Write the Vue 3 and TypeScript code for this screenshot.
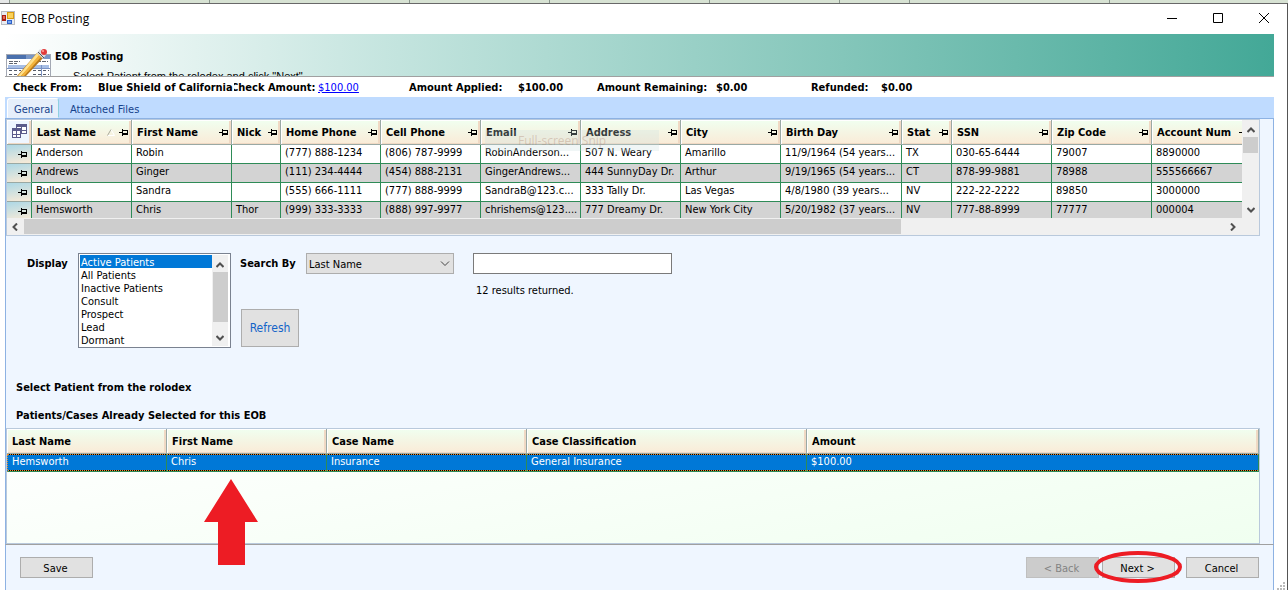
<script setup lang="ts">
import { ref } from 'vue'

interface Column {
  title: string
  width: number
}

const columns: Column[] = [
  { title: 'Last Name', width: 100 },
  { title: 'First Name', width: 100 },
  { title: 'Nick', width: 49 },
  { title: 'Home Phone', width: 100 },
  { title: 'Cell Phone', width: 100 },
  { title: 'Email', width: 100 },
  { title: 'Address', width: 100 },
  { title: 'City', width: 100 },
  { title: 'Birth Day', width: 121 },
  { title: 'Stat', width: 50 },
  { title: 'SSN', width: 100 },
  { title: 'Zip Code', width: 100 },
  { title: 'Account Num', width: 100 },
]

const patients: string[][] = [
  ['Anderson', 'Robin', '', '(777) 888-1234', '(806) 787-9999', 'RobinAnderson...', '507 N. Weary', 'Amarillo', '11/9/1964 (54 years...', 'TX', '030-65-6444', '79007', '8890000'],
  ['Andrews', 'Ginger', '', '(111) 234-4444', '(454) 888-2131', 'GingerAndrews...', '444 SunnyDay Dr.', 'Arthur', '9/19/1965 (54 years...', 'CT', '878-99-9881', '78988', '555566667'],
  ['Bullock', 'Sandra', '', '(555) 666-1111', '(777) 888-9999', 'SandraB@123.c...', '333 Tally Dr.', 'Las Vegas', '4/8/1980 (39 years...', 'NV', '222-22-2222', '89850', '3000000'],
  ['Hemsworth', 'Chris', 'Thor', '(999) 333-3333', '(888) 997-9977', 'chrishems@123....', '777 Dreamy Dr.', 'New York City', '5/20/1982 (37 years...', 'NV', '777-88-8999', '77777', '000004'],
]

const displayOptions = ['Active Patients', 'All Patients', 'Inactive Patients', 'Consult', 'Prospect', 'Lead', 'Dormant']
const display = ref('Active Patients')
const searchBy = ref('Last Name')
const query = ref('')

const caseColumns: Column[] = [
  { title: 'Last Name', width: 160 },
  { title: 'First Name', width: 160 },
  { title: 'Case Name', width: 200 },
  { title: 'Case Classification', width: 280 },
]
const caseRow = ['Hemsworth', 'Chris', 'Insurance', 'General Insurance', '$100.00']
const backdropColumns = [10, 200, 200, 140, 160, 130, 70, 200]
</script>

<template>
  <div class="screen">
    <div class="backdrop">
      <span v-for="(w, i) in backdropColumns" :key="i" :style="{ width: w + 'px' }"></span>
    </div>
    <main class="window">
      <header class="titlebar">
        <svg class="app-icon" width="14" height="14" viewBox="0 0 14 14">
          <rect width="14" height="14" fill="#b9bcc2" />
          <rect x="1" y="1" width="12" height="12" fill="#e8ebf1" />
          <rect x="6" y="1" width="7" height="7" fill="#d99a10" />
          <rect x="7" y="2" width="5" height="5" fill="#fbd25a" />
          <rect x="1" y="4" width="4" height="6" fill="#a81d12" />
          <rect x="2" y="5" width="2" height="3" fill="#e46a55" />
          <rect x="6" y="9" width="5" height="4" fill="#2f62c9" />
          <rect x="7" y="10" width="3" height="2" fill="#78a7f0" />
        </svg>
        <h1>EOB Posting</h1>
        <div class="caption-buttons">
          <button type="button" aria-label="Minimize">
            <svg width="12" height="12"><path d="M1 6.500h10" stroke="#000" /></svg>
          </button>
          <button type="button" aria-label="Maximize">
            <svg width="12" height="12"><path d="M1.500 1.500h9v9h-9z" fill="none" stroke="#000" /></svg>
          </button>
          <button type="button" aria-label="Close">
            <svg width="12" height="12"><path d="M1 1l10 10M11 1L1 11" stroke="#000" /></svg>
          </button>
        </div>
      </header>

      <section class="banner">
        <svg class="banner-icon" width="46" height="28" viewBox="0 0 46 28">
          <rect x="0.500" y="6.500" width="44" height="24" fill="#fff" stroke="#a3a8b3" />
          <rect x="1" y="7" width="43" height="4" fill="#4a70ad" />
          <rect x="20" y="7" width="24" height="4" fill="#7896c6" />
          <path d="M3 13.500h11M3 15.500h8M31 13.500h11" stroke="#60656f" stroke-dasharray="4 1" />
          <rect x="2" y="17" width="41" height="3" fill="#a8bfe5" />
          <path d="M3 22.500h12M27 22.500h16M3 26.500h9M27 26.500h16" stroke="#555b68" stroke-dasharray="3 2" />
          <path d="M1 20.500h43M35.500 17v11" stroke="#7b93c4" />
          <path d="M31 5l6 5-17 18h-9z" fill="#b97a1c" />
          <path d="M31 5l3 3-19 20h-3z" fill="#ffe08a" />
          <path d="M33 7l2 2-17 19h-3z" fill="#f3b33c" />
          <path d="M31 5l3-4 6 6-3 4z" fill="#d9dce2" />
          <path d="M32 4l6 6" stroke="#555" />
          <circle cx="38" cy="4" r="3" fill="#e13c3c" />
          <circle cx="37" cy="3" r="1" fill="#ffa9a0" />
        </svg>
        <div>
          <h2>EOB Posting</h2>
          <p>Select Patient from the rolodex and click "Next"</p>
        </div>
      </section>

      <dl class="summary">
        <div class="check-from"><dt>Check From:</dt><dd>Blue Shield of California</dd></div>
        <div class="check-amount"><dt>Check Amount:</dt><dd><a href="#">$100.00</a></dd></div>
        <div class="applied"><dt>Amount Applied:</dt><dd>$100.00</dd></div>
        <div class="remaining"><dt>Amount Remaining:</dt><dd>$0.00</dd></div>
        <div class="refunded"><dt>Refunded:</dt><dd>$0.00</dd></div>
      </dl>

      <nav class="tabs">
        <button type="button" class="active">General</button>
        <button type="button">Attached Files</button>
      </nav>

      <section class="panel">
        <div class="rolodex">
          <div class="rolodex-body">
            <div class="rolodex-view">
              <table>
                <colgroup>
                  <col class="rowhead-col" />
                  <col v-for="c in columns" :key="c.title" :style="{ width: c.width + 'px' }" />
                </colgroup>
                <thead>
                  <tr>
                    <th class="chooser">
                      <svg width="15" height="15" viewBox="0 0 15 15" fill="#fff" stroke="#5c5c8c">
                        <rect x="4.500" y="0.500" width="10" height="9" />
                        <path d="M5 2h9" stroke-width="2" />
                        <path d="M9.500 3v6M5 6.500h9" />
                        <rect x="0.500" y="4.500" width="8" height="9" />
                        <path d="M1 6h7" stroke-width="2" />
                        <path d="M1 10.500h7M4.500 7v6" />
                      </svg>
                    </th>
                    <th v-for="(c, i) in columns" :key="c.title" scope="col">
                      <div class="head-cell">
                        <span>{{ c.title }}</span>
                        <svg v-if="i === 0" class="sort" width="8" height="7"><path d="M0.500 6.500h7L4 0.500" fill="none" stroke="#fff" /><path d="M4 0.500L0.500 6.500" stroke="#a9a99a" /></svg>
                        <svg class="pin" width="9" height="7"><path d="M0 3h3v1H0zM3 0h1v7H3zM4 1h5v5H4zM4 2v2h4V2z" fill-rule="evenodd" /></svg>
                      </div>
                    </th>
                  </tr>
                </thead>
                <tbody>
                  <tr v-for="p in patients" :key="p[0]">
                    <th class="rowhead" scope="row">
                      <svg class="pin" width="9" height="7"><path d="M0 3h3v1H0zM3 0h1v7H3zM4 1h5v5H4zM4 2v2h4V2z" fill-rule="evenodd" /></svg>
                    </th>
                    <td v-for="(v, i) in p" :key="i">{{ v }}</td>
                  </tr>
                </tbody>
              </table>
              <div class="snip">Full-screen Snip</div>
            </div>
            <div class="scroll-v">
              <svg width="8" height="6"><path d="M0.500 5L4 1.500 7.500 5" /></svg>
              <i></i>
              <svg class="end" width="8" height="6"><path d="M0.500 1L4 4.500 7.500 1" /></svg>
            </div>
          </div>
          <div class="scroll-h">
            <svg width="6" height="8"><path d="M5 0.500L1.500 4 5 7.500" /></svg>
            <i></i>
            <svg class="end" width="6" height="8"><path d="M1 0.500L4.500 4 1 7.500" /></svg>
          </div>
        </div>

        <form class="filters" @submit.prevent>
          <label class="display-label" for="display">Display</label>
          <div class="listbox">
            <select id="display" v-model="display" size="7">
              <option v-for="o in displayOptions" :key="o" :value="o">{{ o }}</option>
            </select>
            <div class="scroll-v">
              <svg width="8" height="6"><path d="M0.500 5L4 1.500 7.500 5" /></svg>
              <i></i>
              <svg class="end" width="8" height="6"><path d="M0.500 1L4 4.500 7.500 1" /></svg>
            </div>
          </div>
          <div class="search">
            <div class="search-row">
              <label for="search-by">Search By</label>
              <div class="combo">
                <select id="search-by" v-model="searchBy">
                  <option>Last Name</option>
                  <option>First Name</option>
                </select>
                <svg width="10" height="6"><path d="M1 0.500L5 4.500 9 0.500" fill="none" stroke="#444" /></svg>
              </div>
              <input v-model="query" type="text" aria-label="Search text" />
            </div>
            <p class="results">12 results returned.</p>
            <button type="button" class="refresh">Refresh</button>
          </div>
        </form>

        <h3>Select Patient from the rolodex</h3>
        <h3>Patients/Cases Already Selected for this EOB</h3>

        <div class="cases">
          <table>
            <colgroup>
              <col v-for="c in caseColumns" :key="c.title" :style="{ width: c.width + 'px' }" />
              <col />
            </colgroup>
            <thead>
              <tr>
                <th v-for="c in caseColumns" :key="c.title" scope="col"><div class="head-cell">{{ c.title }}</div></th>
                <th scope="col"><div class="head-cell">Amount</div></th>
              </tr>
            </thead>
            <tbody>
              <tr><td v-for="v in caseRow" :key="v">{{ v }}</td></tr>
            </tbody>
          </table>
        </div>
      </section>

      <footer>
        <button type="button" class="cmd">Save</button>
        <div class="wizard">
          <button type="button" class="cmd" disabled>&lt; Back</button>
          <div class="next">
            <button type="button" class="cmd">Next &gt;</button>
            <svg class="ring" width="90" height="34"><ellipse cx="45" cy="17" rx="42" ry="14" fill="none" stroke="#ed1c24" stroke-width="4" /></svg>
          </div>
          <button type="button" class="cmd cancel">Cancel</button>
        </div>
      </footer>
      <svg class="arrow" width="54" height="86"><path d="M27 0l27 43H41v43H14V43H0z" fill="#ed1c24" /></svg>
      <svg class="grip" width="8" height="8" fill="#bbb"><path d="M6 0h2v2H6zM3 3h2v2H3zM6 3h2v2H6zM0 6h2v2H0zM3 6h2v2H3zM6 6h2v2H6z" /></svg>
    </main>
  </div>
</template>

<style>
body {
  overflow: hidden;
}
</style>

<style scoped>
* {
  box-sizing: border-box;
}
.screen {
  display: flex;
  flex-direction: column;
  height: 100vh;
  font: 11px/13px "DejaVu Sans Condensed", "DejaVu Sans", sans-serif;
  color: #000;
  background: #fff;
}
.backdrop {
  display: flex;
  height: 3px;
  flex: none;
  background: #d7e2d3;
}
.backdrop span {
  border-right: 1px solid #8a968c;
}
.backdrop span:first-child {
  background: #e6e8e8;
}
.window {
  position: relative;
  display: flex;
  flex-direction: column;
  flex: 1;
  min-height: 0;
  border-top: 1px solid #686868;
  border-right: 1px solid #555;
}
h1, h2, h3, p, dl, dd {
  margin: 0;
}
button, input, select {
  font: inherit;
  color: inherit;
  border-radius: 0;
  padding: 0;
  margin: 0;
}
.titlebar {
  display: flex;
  align-items: center;
  height: 30px;
  padding: 0 17px 2px 1px;
}
.titlebar h1 {
  flex: 1;
  margin-left: 6px;
  padding-top: 1px;
  font: 12px/16px "Open Sans", "Noto Sans", sans-serif;
}
.caption-buttons {
  display: flex;
  gap: 34px;
}
.caption-buttons button {
  display: flex;
  border: 0;
  background: none;
}
.banner {
  display: flex;
  height: 43px;
  margin: 0 13px 0 5px;
  padding: 14px 0 0 1px;
  overflow: hidden;
  border-bottom: 1px solid #a0a0a0;
  background: linear-gradient(90deg, #fff, #c3e4de 31%, #84c6ba 66%, #43a897);
}
.banner-icon {
  flex: none;
}
.banner h2 {
  margin: 2px 0 0 3px;
  font: bold 11px/13px "DejaVu Sans Condensed", sans-serif;
}
.banner p {
  margin: 7px 0 0 21px;
  font: 11px/13px "Liberation Sans", sans-serif;
}
.summary {
  display: flex;
  height: 20px;
  padding: 4px 0 0 13px;
  font-weight: bold;
  white-space: nowrap;
}
.summary > div {
  display: flex;
}
.summary a {
  color: #00f;
  font-weight: normal;
}
.check-from {
  position: relative;
  z-index: 1;
  width: 221px;
}
.check-from dt {
  width: 85px;
}
.check-from dd {
  flex: 1;
  background: #fff;
}
.check-amount {
  width: 178px;
  margin-left: -3px;
}
.check-amount dt {
  width: 87px;
}
.applied {
  width: 188px;
}
.applied dt {
  width: 109px;
}
.remaining {
  width: 214px;
}
.remaining dt {
  width: 119px;
}
.refunded dt {
  width: 70px;
}
.tabs {
  display: flex;
  flex: none;
  height: 22px;
  margin: 0 13px 0 5px;
  padding: 1px 0 0 2px;
  background: #bfdbff;
  border-bottom: 1px solid #8db2e3;
  color: #15428b;
}
.tabs button {
  padding: 2px 5px 0 6px;
  border: 1px solid transparent;
  background: none;
}
.tabs .active {
  margin-right: 4px;
  border-color: #fff #8fd0e0 transparent #fff;
  border-radius: 3px 3px 0 0;
  background: #e6effb;
}
.panel {
  display: flex;
  flex-direction: column;
  flex: 1;
  margin: 0 13px 0 5px;
  border: solid #8db2e3;
  border-width: 0 1px;
  background: #eff6ff;
}
table {
  border-collapse: separate;
  border-spacing: 0;
  table-layout: fixed;
}
th, td {
  padding: 0;
  text-align: left;
  overflow: hidden;
  white-space: nowrap;
}
.rolodex, .cases {
  margin-right: 13px;
  border: 1px solid #b9c9dc;
}
.rolodex-body {
  display: flex;
  height: 98px;
}
.rolodex-view {
  position: relative;
  flex: 1;
  min-width: 0;
  overflow: hidden;
  background: #fff;
}
.rolodex table {
  width: 1245px;
}
.rowhead-col {
  width: 25px;
}
thead th {
  height: 25px;
  border-right: 1px solid #9aa9a4;
  border-bottom: 1px solid #9aa9a4;
  background: linear-gradient(#f0fff0, #faebd7);
  box-shadow: inset 1px 1px #fff, inset -2px -1px #f0d9c4;
}
.head-cell {
  display: flex;
  align-items: center;
  padding: 0 3px 0 5px;
}
.head-cell span {
  flex: 1;
  font-weight: bold;
}
.head-cell .sort {
  margin-right: 4px;
}
.pin {
  flex: none;
}
.chooser {
  padding-top: 2px;
  text-align: center;
  background: #eff6ff;
}
.rolodex tbody td, .rolodex tbody .rowhead {
  height: 19px;
  border-right: 1px solid #2e8b57;
  border-bottom: 1px solid #2e8b57;
}
.rolodex tbody td {
  padding: 1px 0 0 4px;
  vertical-align: top;
}
.rolodex tbody tr:nth-child(even) td {
  background: #d3d3d3;
}
.rolodex tbody .rowhead {
  padding: 0 4px 0 0;
  text-align: right;
  border-bottom-color: #9aa9a4;
  background: linear-gradient(170deg, #add8e6, #faebd7);
}
.snip {
  position: absolute;
  left: 478px;
  top: 10px;
  width: 174px;
  height: 21px;
  padding: 3px 0 0 33px;
  font: 12px/16px "Open Sans", sans-serif;
  color: rgba(170, 130, 110, 0.35);
  background: rgba(200, 222, 222, 0.28);
}
.scroll-v {
  display: flex;
  flex: none;
  flex-direction: column;
  align-items: center;
  width: 16px;
  padding: 7px 0 5px;
  background: #f0f0f0;
}
.rolodex .scroll-v {
  width: 17px;
}
.scroll-v i {
  width: 15px;
  height: 16px;
  margin-top: 4px;
  background: #cdcdcd;
}
.scroll-h {
  display: flex;
  align-items: center;
  height: 17px;
  padding: 1px 23px 1px 5px;
  background: #f0f0f0;
}
.scroll-h i {
  width: 877px;
  height: 15px;
  margin-left: 6px;
  background: #cdcdcd;
}
.scroll-v .end {
  margin-top: auto;
}
.scroll-h .end {
  margin-left: auto;
}
.scroll-v svg, .scroll-h svg {
  fill: none;
  stroke: #505050;
  stroke-width: 2;
}
.filters {
  display: flex;
  margin-top: 17px;
  padding-left: 21px;
}
label {
  font-weight: bold;
}
.display-label {
  width: 51px;
  margin-top: 4px;
}
.listbox {
  display: flex;
  width: 153px;
  height: 95px;
  padding: 1px 2px 1px 1px;
  border: 1px solid #7a8290;
  background: #fff;
}
.listbox select {
  flex: 1;
  height: 91px;
  border: 0;
  outline: 0;
  overflow: hidden;
  scrollbar-width: none;
  background: #fff;
}
.listbox option {
  height: 13px;
  min-height: 13px;
  padding: 1px 0 0 1px;
  line-height: 13px;
}
.listbox option:checked {
  color: #fff;
  background: #0078d7 linear-gradient(#0078d7, #0078d7);
}
.listbox .scroll-v i {
  height: 50px;
}
.search {
  margin-left: 9px;
}
.search-row {
  display: flex;
}
.search-row label {
  width: 66px;
  margin-top: 4px;
}
.combo {
  position: relative;
  width: 148px;
  margin-right: 19px;
}
.combo select {
  appearance: none;
  width: 100%;
  height: 21px;
  padding: 2px 0 0 2px;
  border: 1px solid #adadad;
  background: #e1e1e1;
}
.combo svg {
  position: absolute;
  right: 4px;
  top: 8px;
}
.search-row input {
  width: 199px;
  height: 21px;
  padding: 0 3px;
  border: 1px solid #7a7a7a;
  background: #fff;
}
.results {
  margin: 10px 0 12px 236px;
}
.refresh {
  width: 58px;
  height: 38px;
  margin-left: 1px;
  border: 1px solid #adadad;
  background: #e1e1e1;
  color: #1464c8;
  font-size: 12px;
}
h3 {
  margin: 0 0 15px 10px;
  font: inherit;
  font-weight: bold;
}
.filters + h3 {
  margin-top: 33px;
}
h3 + .cases {
  margin-top: -9px;
}
.cases {
  flex: 1;
  background: linear-gradient(170deg, #fff, #f0fff0);
}
.cases table {
  width: 100%;
}
.cases th {
  font-weight: bold;
}
.cases td {
  height: 18px;
  padding: 1px 0 0 4px;
  vertical-align: top;
  color: #fff;
  border-right: 1px solid #2e8b57;
  border-bottom: 1px solid #2e8b57;
  background:
    repeating-linear-gradient(90deg, #f08c28 0 1px, #000 1px 2px) top / 100% 1px no-repeat,
    repeating-linear-gradient(90deg, #f08c28 0 1px, #000 1px 2px) bottom / 100% 1px no-repeat,
    #0078d7;
}
.cases td:first-child {
  padding-left: 4px;
  border-left: 1px dotted #f08c28;
}
footer {
  display: flex;
  flex: none;
  justify-content: space-between;
  align-items: flex-start;
  height: 46px;
  margin: 0 13px 0 5px;
  padding: 12px 14px 0;
  border: solid #8db2e3;
  border-width: 0 1px;
  border-top: 1px solid #a0a0a0;
  background: #eff6ff;
}
.cmd {
  width: 73px;
  height: 21px;
  padding: 1px 2px 0 0;
  border: 1px solid #adadad;
  background: #e1e1e1;
}
.cmd:disabled {
  border-color: #bfbfbf;
  background: #ccc;
  color: #838383;
}
.wizard {
  display: flex;
  gap: 3px;
}
.next {
  position: relative;
}
.ring {
  position: absolute;
  left: -9px;
  top: -7px;
}
.cancel {
  margin-left: 8px;
}
.arrow {
  position: absolute;
  left: 204px;
  top: 475px;
}
.grip {
  position: absolute;
  right: 2px;
  bottom: 0;
}
</style>
